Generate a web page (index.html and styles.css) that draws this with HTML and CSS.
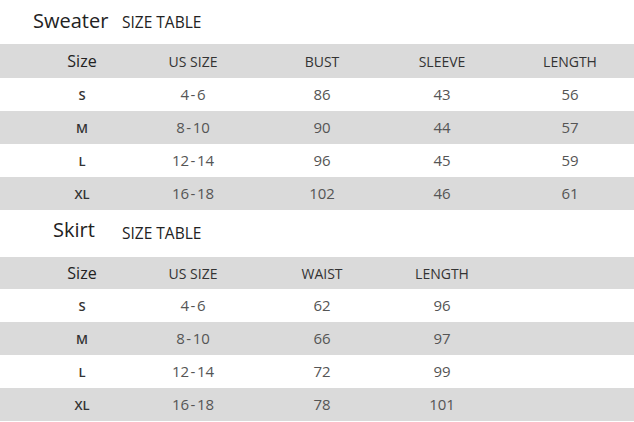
FILE: index.html
```html
<!DOCTYPE html>
<html>
<head>
<meta charset="utf-8">
<link rel="stylesheet" href="styles.css">
</head>
<body>
<section class="block">
  <div class="title title-sweater"><span class="name">Sweater</span><span class="sub">SIZE TABLE</span></div>
  <div class="row head"><span class="c big">Size</span><span class="c">US SIZE</span><span class="c">BUST</span><span class="c">SLEEVE</span><span class="c">LENGTH</span></div>
  <div class="row"><span class="c sz">S</span><span class="c v">4&#8202;-&#8202;6</span><span class="c v">86</span><span class="c v">43</span><span class="c v">56</span></div>
  <div class="row gray"><span class="c sz">M</span><span class="c v">8&#8202;-&#8202;10</span><span class="c v">90</span><span class="c v">44</span><span class="c v">57</span></div>
  <div class="row"><span class="c sz">L</span><span class="c v">12&#8202;-&#8202;14</span><span class="c v">96</span><span class="c v">45</span><span class="c v">59</span></div>
  <div class="row gray"><span class="c sz">XL</span><span class="c v">16&#8202;-&#8202;18</span><span class="c v">102</span><span class="c v">46</span><span class="c v">61</span></div>
</section>
<section class="block">
  <div class="title title-skirt"><span class="name">Skirt</span><span class="sub">SIZE TABLE</span></div>
  <div class="row head head-skirt"><span class="c big">Size</span><span class="c">US SIZE</span><span class="c">WAIST</span><span class="c">LENGTH</span><span class="c"></span></div>
  <div class="row"><span class="c sz">S</span><span class="c v">4&#8202;-&#8202;6</span><span class="c v">62</span><span class="c v">96</span><span class="c"></span></div>
  <div class="row gray"><span class="c sz">M</span><span class="c v">8&#8202;-&#8202;10</span><span class="c v">66</span><span class="c v">97</span><span class="c"></span></div>
  <div class="row"><span class="c sz">L</span><span class="c v">12&#8202;-&#8202;14</span><span class="c v">72</span><span class="c v">99</span><span class="c"></span></div>
  <div class="row gray"><span class="c sz">XL</span><span class="c v">16&#8202;-&#8202;18</span><span class="c v">78</span><span class="c v">101</span><span class="c"></span></div>
</section>
</body>
</html>
```
FILE: styles.css
```css
html, body {
  margin: 0;
  padding: 0;
  background: #fff;
  width: 634px;
  height: 422px;
  overflow: hidden;
}
body {
  font-family: "Open Sans", "Liberation Sans", sans-serif;
  color: #333;
}
.title {
  display: flex;
  align-items: baseline;
  box-sizing: border-box;
}
.title-sweater {
  height: 44px;
  padding-top: 8px;
  padding-left: 33px;
}
.title-sweater .name { width: 89px; }
.title-skirt {
  height: 47px;
  padding-top: 9px;
  padding-left: 53px;
}
.title-skirt .name { width: 69px; position: relative; top: -2px; }
.name {
  font-size: 20px;
  color: #222;
  line-height: 26px;
}
.sub {
  font-size: 15.5px;
  color: #222;
  line-height: 20px;
}
.row {
  display: grid;
  grid-template-columns: 68px 154px 104px 136px 120px;
  padding-left: 48px;
  height: 33px;
  align-items: center;
}
.head {
  background: #dadada;
  height: 34px;
}
.head-skirt { height: 32px; }
.gray { background: #dadada; }
.c {
  text-align: center;
  font-size: 14px;
  color: #333;
  white-space: nowrap;
}
.big {
  font-size: 16px;
  color: #222;
}
.sz {
  font-size: 13px;
  font-weight: 600;
  color: #333;
}
.v {
  font-size: 15px;
  color: #555;
  position: relative;
  top: -1px;
}
```
